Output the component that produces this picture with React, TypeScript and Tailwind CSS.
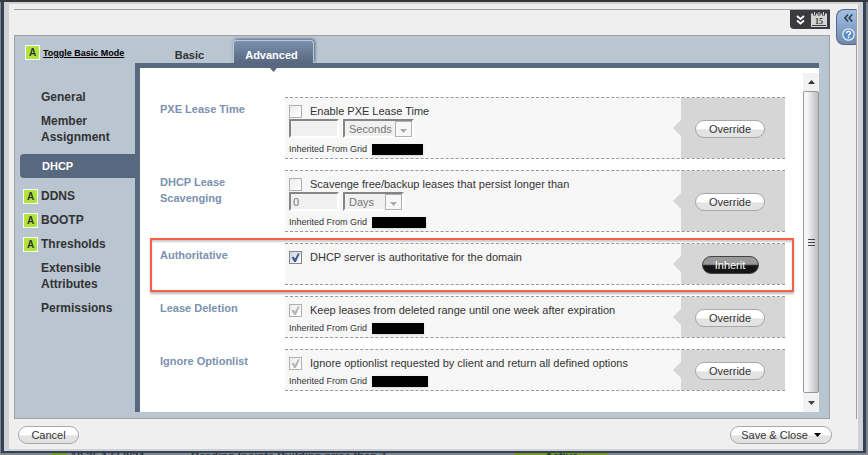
import React from "react";

type NavItem = { text: string; badge?: boolean; active?: boolean };

const navItems: NavItem[] = [
  { text: "General" },
  { text: "Member Assignment" },
  { text: "DHCP", active: true },
  { text: "DDNS", badge: true },
  { text: "BOOTP", badge: true },
  { text: "Thresholds", badge: true },
  { text: "Extensible Attributes" },
  { text: "Permissions" },
];

const Badge = () => (
  <span className="flex size-[15px] shrink-0 items-center justify-center border border-white bg-[#b0e53c] text-[10px] leading-none font-bold text-[#333]">
    A
  </span>
);

const pill =
  "h-[18px] rounded-full border border-[#a8a8a8] bg-linear-to-b from-white from-50% to-[#e3e3e3] to-55% text-[11px] leading-4 text-[#333]";

const Triangle = ({ className }: { className?: string }) => (
  <svg viewBox="0 0 7 4" className={`h-1 w-[7px] ${className ?? ""}`} aria-hidden="true">
    <path d="M0 0h7L3.5 4z" fill="currentColor" />
  </svg>
);

const Check = ({ id, label, checked, disabled }: { id: string; label: string; checked?: boolean; disabled?: boolean }) => (
  <div className="flex h-[13px] items-center gap-2">
    <span className="relative flex size-[13px]">
      <input
        id={id}
        type="checkbox"
        defaultChecked={checked}
        disabled={disabled}
        className={`peer size-[13px] appearance-none border bg-linear-to-br to-white ${
          disabled ? "border-[#b0b0b0] from-[#ececec]" : "border-[#858585] from-[#cdd3dc]"
        }`}
      />
      <svg
        viewBox="0 0 13 13"
        className={`pointer-events-none absolute inset-0 hidden peer-checked:block ${
          disabled ? "text-[#b5b5b5]" : "text-[#42568f]"
        }`}
      >
        <path d="M2.600 6.400 4.600 5.600 6 7.800 9 2.200l1.700.3L6.900 11H5.200z" fill="currentColor" />
      </svg>
    </span>
    <label htmlFor={id} className="text-[11px] leading-[13px] whitespace-nowrap text-[#333]">
      {label}
    </label>
  </div>
);

const sunken = "h-[19px] border-2 border-t-[#858585] border-r-white border-b-white border-l-[#858585] bg-[#f0f0f0] text-[11px] text-[#777]";

const Duration = ({ name, value, unit, selectWidth }: { name: string; value: string; unit: string; selectWidth: string }) => (
  <div className="mt-px flex gap-1">
    <input type="text" aria-label={`${name} value`} defaultValue={value} disabled className={`w-[50px] px-0.5 ${sunken}`} />
    <span className="relative flex">
      <select aria-label={`${name} unit`} disabled className={`appearance-none pl-1 opacity-100 ${sunken} ${selectWidth}`}>
        <option>{unit}</option>
      </select>
      <span className="pointer-events-none absolute top-0.5 right-0.5 flex h-4 w-[17px] items-center justify-center border border-[#b0b0b0] bg-[#f7f7f7]">
        <Triangle className="mt-1 text-[#aaa]" />
      </span>
    </span>
  </div>
);

const Inherited = ({ width, className }: { width: string; className?: string }) => (
  <div className={`flex h-[11px] items-center ${className ?? ""}`}>
    <span className="w-[83px] text-[9px] leading-[11px] whitespace-nowrap text-[#333]">Inherited From Grid</span>
    <span className={`h-[11px] bg-black shadow-sm ${width}`} />
  </div>
);

type RowProps = {
  label: string;
  height: string;
  inherit?: boolean;
  children: React.ReactNode;
};

const Row = ({ label, height, inherit, children }: RowProps) => (
  <div className="relative flex">
    <h3 className="w-[125px] shrink-0 pt-1 pr-8 text-[11px] leading-4 font-bold text-[#7a92b0]">
      {label}
    </h3>
    <div className={`flex flex-1 border-y border-dashed border-[#999] bg-[#f7f7f7] ${height}`}>
      <div className="flex-1 pt-[7px] pl-1">{children}</div>
      <div className="relative flex w-[104px] items-center justify-center bg-[#d6d6d6] pt-0.5 pr-1.5">
        <svg viewBox="0 0 8 16" className="absolute top-1/2 -left-2 h-4 w-2 -translate-y-1/2" aria-hidden="true">
          <path d="M8 0v16L0 8z" fill="#d6d6d6" />
        </svg>
        {inherit ? (
          <button className="h-[18px] w-[57px] rounded-full border border-[#444] bg-linear-to-b from-[#999] from-45% to-[#151515] to-55% text-[11px] leading-4 text-white">
            Inherit
          </button>
        ) : (
          <button className={`w-[70px] ${pill}`}>Override</button>
        )}
      </div>
    </div>
    {inherit && (
      <div className="pointer-events-none absolute -top-[5px] -right-[9px] -bottom-[7px] -left-[10px] border-2 border-[#fa5f4b] shadow-[0_2px_2px_#bbb,inset_0_2px_2px_#ccc]" />
    )}
  </div>
);

const Scrollbar = () => (
  <div className="mt-[5px] flex w-4 flex-col bg-[#f2f2f2]">
    <div className="flex h-[18px] items-center justify-center">
      <Triangle className="rotate-180 text-[#333]" />
    </div>
    <div className="flex flex-1 items-center justify-center rounded-xs border border-[#979797] bg-linear-to-r from-[#f7f7f7] from-20% via-[#e2e2e4] via-50% to-[#bcbcc2]">
      <div className="flex flex-col gap-0.5">
        <span className="h-px w-[7px] bg-[#444]" />
        <span className="h-px w-[7px] bg-[#444]" />
        <span className="h-px w-[7px] bg-[#444]" />
      </div>
    </div>
    <div className="flex h-[19px] items-center justify-center">
      <Triangle className="text-[#444]" />
    </div>
  </div>
);

const Toolbar = () => (
  <div className="flex h-[26px] items-start justify-end border-t border-[#a0a0a0]">
    <div className="flex h-[19px] w-10 items-center justify-between rounded-bl-sm bg-[#3a3b40] pr-[3px] pl-1.5">
      <button aria-label="Expand">
        <svg viewBox="0 0 9 10" className="h-2.5 w-[9px]" fill="none" stroke="#fff" strokeWidth="1.8">
          <path d="m1 1 3.5 3L8 1M1 5.5l3.5 3 3.5-3" />
        </svg>
      </button>
      <button aria-label="Calendar">
        <svg viewBox="0 0 16 17" className="h-[17px] w-4">
          <path d="M0 2.500h16V16H0z" fill="#d4d4d4" />
          <path d="M1 14.500h14" stroke="#3a3b40" />
          <path d="M2 1h3v3.500H2zM11 1h3v3.500h-3zM6.500 1h3v3.500h-3z" fill="#3a3b40" />
          <path d="M3.500 1v3M8 1v3M12.500 1v3" stroke="#d4d4d4" />
          <text x="8" y="12.500" textAnchor="middle" fontSize="8" fontWeight="bold" fontFamily="Liberation Serif, serif" fill="#333">
            15
          </text>
        </svg>
      </button>
    </div>
  </div>
);

const HelpTab = () => (
  <aside className="ml-1.5 w-[21px] border-r border-[#a0a0a0]">
    <div className="flex h-9 flex-col items-center justify-between rounded-l-lg border border-r-0 border-[#55688a] bg-linear-to-b from-[#a3c0e8] to-[#7089ab] pt-1 pb-[3px] pl-1">
      <button aria-label="Open panel">
        <svg viewBox="0 0 9 8" className="h-2 w-[9px]" fill="none" stroke="#2c3138" strokeWidth="1.4">
          <path d="M4 .5.900 4 4 7.500M8.200.5 5.100 4l3.100 3.500" />
        </svg>
      </button>
      <button aria-label="Help">
        <svg viewBox="0 0 13 13" className="size-[13px]">
          <circle cx="6.500" cy="6.500" r="5.700" fill="#5b8dcb" stroke="#e4eefa" strokeWidth="1.300" />
          <path d="M4.600 5.200c0-2.600 3.900-2.400 3.900-.2 0 1.300-1.900 1.300-1.900 2.700" fill="none" stroke="#fff" strokeWidth="1.500" />
          <circle cx="6.600" cy="9.300" r=".9" fill="#fff" />
        </svg>
      </button>
    </div>
  </aside>
);

const App = () => {
  return (
    <div className="flex min-h-screen flex-col border-t-2 border-[#38383a] bg-[#868686] font-['Liberation_Sans',Arial,sans-serif]">
      <div className="mr-0.5 ml-px flex flex-1 flex-col border-x-3 border-b-2 border-[#2f435d] bg-[#d0d1d4] pr-[5px] pb-0.5 pl-[5px]">
        <div className="mt-0.5 flex flex-1 flex-col bg-[#efefef]">
          <div className="flex flex-1 pt-[5px] pr-px pl-[5px]">
            <div className="flex flex-1 flex-col">
              <Toolbar />
              <div className="flex flex-1 flex-col border border-[#a0a0a0] bg-[#b9c5d1] pr-2.5 pb-1.5">
                <div className="flex h-[27px]">
                  <div className="flex w-[135px] items-start gap-[3px] pt-[9px] pl-2.5">
                    <Badge />
                    <a href="#" className="text-[9px] leading-4 font-bold whitespace-nowrap text-black underline">
                      Toggle Basic Mode
                    </a>
                  </div>
                  <div className="flex items-end text-[11px] font-bold">
                    <button className="h-[23px] w-[83px] pt-2 pr-1 leading-none text-[#333]">Basic</button>
                    <button className="relative h-[23px] w-[81px] rounded-t-sm border border-b-0 border-[#b9c8dc] bg-linear-to-b from-[#7990af] to-[#58687f] pt-1.5 pr-1 leading-none text-white shadow-[1px_-1px_3px_#55647b]">
                      Advanced
                      <Triangle className="absolute -bottom-[9px] left-9 text-[#58687f]" />
                    </button>
                  </div>
                </div>
                <div className="flex flex-1">
                  <nav className="flex w-[120px] flex-col pt-[22px] text-xs leading-4 font-bold text-[#333]">
                    {navItems.map((item) =>
                      item.active ? (
                        <a key={item.text} href="#" className="mt-[5px] mb-1.5 ml-[5px] rounded-l-sm bg-[#58687f] py-1 pl-[22px] text-[11px] leading-4 text-white">
                          {item.text}
                        </a>
                      ) : (
                        <a key={item.text} href="#" className="flex items-end gap-[3px] py-1 pr-4 pl-2">
                          {item.badge ? <Badge /> : <span className="w-[15px] shrink-0" />}
                          <span>{item.text}</span>
                        </a>
                      )
                    )}
                  </nav>
                  <main className="flex flex-1 border-t-5 border-l-5 border-[#58687f] bg-white">
                    <div className="flex flex-1 flex-col gap-[11px] pt-[29px] pr-[18px] pb-[21px] pl-5">
                      <Row label="PXE Lease Time" height="h-[62px]">
                        <Check id="pxe" label="Enable PXE Lease Time" disabled />
                        <Duration name="PXE lease time" value="" unit="Seconds" selectWidth="w-[71px]" />
                        <Inherited width="w-[51px]" className="mt-1.5" />
                      </Row>
                      <Row label="DHCP Lease Scavenging" height="h-[62px]">
                        <Check id="scavenge" label="Scavenge free/backup leases that persist longer than" disabled />
                        <Duration name="Scavenging" value="0" unit="Days" selectWidth="w-[61px]" />
                        <Inherited width="w-[54px]" className="mt-1.5" />
                      </Row>
                      <Row label="Authoritative" height="h-[42px]" inherit>
                        <Check id="authoritative" label="DHCP server is authoritative for the domain" checked />
                      </Row>
                      <Row label="Lease Deletion" height="h-[42px]">
                        <Check id="deletion" label="Keep leases from deleted range until one week after expiration" checked disabled />
                        <Inherited width="w-[52px]" className="mt-1.5" />
                      </Row>
                      <Row label="Ignore Optionlist" height="h-[42px]">
                        <Check id="optionlist" label="Ignore optionlist requested by client and return all defined options" checked disabled />
                        <Inherited width="w-[56px]" className="mt-1.5" />
                      </Row>
                    </div>
                    <Scrollbar />
                  </main>
                </div>
              </div>
            </div>
            <HelpTab />
          </div>
          <footer className="flex items-center justify-between pt-[7px] pr-[26px] pb-[5px] pl-[9px]">
            <button className={`w-[61px] ${pill}`}>Cancel</button>
            <button className={`flex w-[102px] items-center justify-center gap-1.5 ${pill}`}>
              Save &amp; Close
              <Triangle className="text-black" />
            </button>
          </footer>
        </div>
      </div>

      {/* top of the list row behind the dialog */}
      <div className="flex h-0.5 overflow-hidden text-[11px] leading-[7px] font-bold text-[#333]">
        <span className="ml-[52px] h-0.5 w-[15px] bg-[#76961c]" />
        <span className="ml-1 w-[120px]">10.35.177.0/24</span>
        <span className="flex-1 whitespace-nowrap">Reading (points Building price than 7</span>
        <span className="mr-[260px] w-[93px] bg-[#76961c] text-center">Active</span>
      </div>
    </div>
  );
};

export default App;
